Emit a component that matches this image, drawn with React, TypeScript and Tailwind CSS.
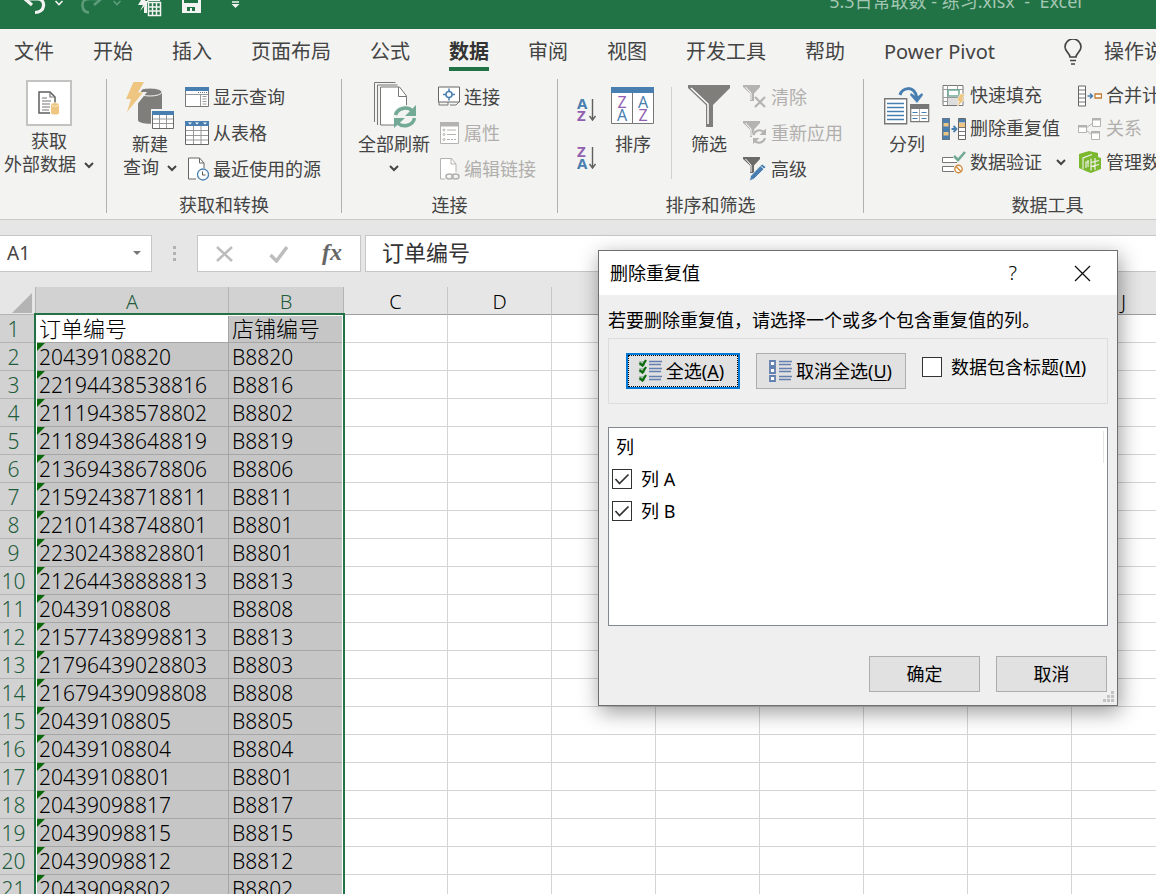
import { ReactNode, useState } from "react";

const TABS = ["文件", "开始", "插入", "页面布局", "公式", "数据", "审阅", "视图", "开发工具", "帮助", "Power Pivot"];

const COLUMNS = ["A", "B", "C", "D", "E", "F", "G", "H", "I", "J", "K", "L", "M", "N", "O", "P", "Q", "R", "S", "T"];

const ROWS = [
    ["订单编号", "店铺编号"],
    ["20439108820", "B8820"],
    ["22194438538816", "B8816"],
    ["21119438578802", "B8802"],
    ["21189438648819", "B8819"],
    ["21369438678806", "B8806"],
    ["21592438718811", "B8811"],
    ["22101438748801", "B8801"],
    ["22302438828801", "B8801"],
    ["21264438888813", "B8813"],
    ["20439108808", "B8808"],
    ["21577438998813", "B8813"],
    ["21796439028803", "B8803"],
    ["21679439098808", "B8808"],
    ["20439108805", "B8805"],
    ["20439108804", "B8804"],
    ["20439108801", "B8801"],
    ["20439098817", "B8817"],
    ["20439098815", "B8815"],
    ["20439098812", "B8812"],
    ["20439098802", "B8802"],
];

function Svg({ w, h, children }: { w: number; h: number; children: ReactNode }) {
    return (
        <svg width={w} height={h} viewBox={`0 0 ${w} ${h}`} fill="none" className="shrink-0" aria-hidden="true">
            {children}
        </svg>
    );
}

function Chevron() {
    return (
        <Svg w={10} h={8}>
            <path d="M1 2l4 4 4-4" stroke="#444" strokeWidth="2" />
        </Svg>
    );
}

/* ---------- title bar ---------- */

function QuickChevron() {
    return (
        <Svg w={10} h={28}>
            <path d="M1.5 12L5 15.5 8.5 12" stroke="currentColor" strokeWidth="1.6" />
        </Svg>
    );
}

function TitleBar() {
    return (
        <header className="-mt-8 flex h-[61px] shrink-0 items-end overflow-hidden bg-[#217346] pb-3 pl-[22px] pr-[74px] text-[#f3f3f1]">
            <div className="flex gap-4">
                <button aria-label="撤消" className="flex gap-2">
                    <Svg w={24} h={28}>
                        <path d="M4 10h11c5 0 7 3 6.5 7s-4 6.5-8.5 6.5" stroke="currentColor" strokeWidth="3.2" />
                        <path d="M9 3L3 10l7 6" stroke="currentColor" strokeWidth="3.2" />
                    </Svg>
                    <QuickChevron />
                </button>
                <button aria-label="恢复" className="flex gap-2 text-[#5f9c7b]">
                    <Svg w={24} h={28}>
                        <path d="M20 10H9c-5 0-7 3-6.5 7s3 6.5 6.5 6.5" stroke="currentColor" strokeWidth="2.5" />
                        <path d="M15 3l6 7-7 6" stroke="currentColor" strokeWidth="2.5" />
                    </Svg>
                    <QuickChevron />
                </button>
                <button aria-label="刷新表格">
                    <Svg w={24} h={28}>
                        <path d="M6 6L0 16h5l-3 6 9-10H7l5-6z" fill="currentColor" />
                        <path d="M12 6h10v6H9v12H6v-6z" fill="currentColor" />
                        <path d="M10.5 13.5h12v13h-12zM10.5 18h12M10.5 22h12M14.5 13.5v13M18.5 13.5v13" fill="#217346" stroke="currentColor" strokeWidth="1.5" />
                    </Svg>
                </button>
                <button aria-label="保存">
                    <Svg w={26} h={28}>
                        <path d="M4 6h19v18H4z" fill="currentColor" />
                        <path d="M6 6h14v8H6zM9 18h8v4H9z" fill="#217346" />
                        <path d="M12 19h2v4h-2z" fill="currentColor" />
                    </Svg>
                </button>
                <button aria-label="自定义快速访问工具栏">
                    <Svg w={30} h={28}>
                        <path d="M12 13h7M12 9.5h7" stroke="currentColor" strokeWidth="1.5" />
                        <path d="M11.5 15h8l-4 4z" fill="currentColor" />
                    </Svg>
                </button>
            </div>
            <h1 className="mb-0.5 ml-auto whitespace-pre text-[18px] leading-7 text-[#a3c6b2]">5.3日常取数 - 练习.xlsx  -  Excel</h1>
        </header>
    );
}

/* ---------- ribbon icons ---------- */

function GetDataIcon() {
    return (
        <Svg w={22} h={24}>
            <path d="M1 1h11l5 5v16H1z" fill="#fff" stroke="#5f5f5d" strokeWidth="1.5" />
            <path d="M12 1v5h5M4 7h5M4 10h9M4 13h8M4 16h8M4 19h7" stroke="#777" strokeWidth="1.2" />
            <path d="M12 12h10v12H12z" fill="#fff" />
            <path d="M13 14v8c0 2 8 2 8 0v-8" fill="#eec681" />
            <ellipse cx="17" cy="13.5" rx="4" ry="1.8" fill="#eec681" stroke="#fff" strokeWidth=".6" />
        </Svg>
    );
}

function NewQueryIcon() {
    return (
        <Svg w={48} h={48}>
            <path d="M12 10v28c0 5 24 5 24 0V10" fill="#7f7e7b" />
            <ellipse cx="24" cy="10" rx="12" ry="4" fill="#7f7e7b" stroke="#f3f3f1" strokeWidth="1" />
            <path d="M7 0h12l-6 11h6L3 31H0l4-14h-5z" fill="#f3f3f1" stroke="#f3f3f1" strokeWidth="2" />
            <path d="M7.5 0H18l-6 10.5h5L1 30l4-13H0z" fill="#eec681" />
            <path d="M25 27h24v21H25z" fill="#f3f3f1" />
            <path d="M26.5 29.5h21v17h-21z" fill="#fff" stroke="#6a6a68" />
            <path d="M33.5 32v14M40.5 32v14M27 37h20M27 41.5h20" stroke="#999" />
            <path d="M26 29h22v4H26z" fill="#487fb0" />
        </Svg>
    );
}

function ShowQueryIcon() {
    return (
        <Svg w={24} h={20}>
            <path d="M.5 .5h23v19H.5z" fill="#fff" stroke="#777" />
            <path d="M0 0h24v4H0z" fill="#487fb0" />
            <path d="M13 5.5h9" stroke="#777" strokeDasharray="1 1" />
            <path d="M15.5 7v12M1 7.5h22M17.5 9.5h4M17.5 12h4M17.5 14.5h4M17.5 17h4" stroke="#999" />
        </Svg>
    );
}

function FromTableIcon() {
    return (
        <Svg w={24} h={24}>
            <path d="M.5 .5h23v23H.5z" fill="#fff" stroke="#666" />
            <path d="M8.5 5v18M16 5v18M1 9.5h22M1 14.5h22M1 19h22" stroke="#999" />
            <path d="M0 0h24v5H0z" fill="#487fb0" />
            <path d="M3 1.5h4l-2 2zM10 1.5h4l-2 2zM18 1.5h4l-2 2z" fill="#fff" />
        </Svg>
    );
}

function RecentIcon() {
    return (
        <Svg w={24} h={24}>
            <path d="M11 22H3.5V1h11L19 6v5" fill="#fff" stroke="#666" />
            <path d="M14.5 1v5H19" stroke="#666" />
            <circle cx="18" cy="17.5" r="5.5" fill="#fff" stroke="#487fb0" strokeWidth="1.3" />
            <path d="M17.5 14.5V18h3" stroke="#555" />
        </Svg>
    );
}

function RefreshIcon() {
    return (
        <Svg w={46} h={48}>
            <path d="M3.5 40V.5h21M6.5 43V3h20" stroke="#777" />
            <path d="M9.5 5h19l7 9v29h-26z" fill="#fff" stroke="#777" />
            <path d="M27.5 5v9.5h8" stroke="#777" />
            <circle cx="34" cy="35" r="12" fill="#f3f3f1" />
            <path d="M24.5 33a10 9 0 0 1 17-4M43.5 36a10 9 0 0 1-17 5" stroke="#73aa97" strokeWidth="3.5" />
            <path d="M45 23v11H34zM23 46V36h11z" fill="#73aa97" />
        </Svg>
    );
}

function ConnectionIcon() {
    return (
        <Svg w={22} h={22}>
            <path d="M.5 1h21v15H.5z" fill="#fff" stroke="#666" />
            <path d="M1 16v3h9v-3M12 19h6l3-3" stroke="#777" />
            <path d="M11 2.5v12M5 8.5h12" stroke="#487fb0" strokeWidth="1.5" />
            <circle cx="11" cy="8.5" r="3" fill="#fff" stroke="#487fb0" strokeWidth="1.5" />
        </Svg>
    );
}

function PropertiesIcon() {
    return (
        <Svg w={22} h={22}>
            <path d="M2.5 .5h18v21h-18z" fill="#fff" stroke="#b5b3b1" />
            <path d="M2 0h19v4.5H2z" fill="#b5b3b1" />
            <path d="M9 8h9M9 12.5h9M9 17.5h3M13 17.5h2M16 17.5h2" stroke="#b5b3b1" />
            <circle cx="6" cy="8" r="1" stroke="#b5b3b1" />
            <circle cx="6" cy="12.5" r="1" stroke="#b5b3b1" />
            <circle cx="6" cy="17.5" r="1" stroke="#b5b3b1" />
        </Svg>
    );
}

function EditLinksIcon() {
    return (
        <Svg w={22} h={24}>
            <path d="M7 22H2.5V1.5h11L18 7v8" fill="#fff" stroke="#b5b3b1" />
            <path d="M13 1.5V7h5" stroke="#b5b3b1" />
            <ellipse cx="11.5" cy="19.5" rx="3.5" ry="2.5" stroke="#b5b3b1" strokeWidth="1.6" />
            <ellipse cx="17.5" cy="19.5" rx="3.5" ry="2.5" stroke="#b5b3b1" strokeWidth="1.6" />
        </Svg>
    );
}

function SortLetters({ top, bottom }: { top: string; bottom: string }) {
    const color = (letter: string) => (letter === "A" ? "#487fb0" : "#9160b0");
    return (
        <Svg w={20} h={26}>
            <text x="0" y="12" fontSize="15" fontWeight="700" fill={color(top)}>{top}</text>
            <text x="0" y="24" fontSize="15" fontWeight="700" fill={color(bottom)}>{bottom}</text>
            <path d="M15.5 2v20M12.5 19l3 4 3-4" stroke="#5f5f5d" strokeWidth="1.4" />
        </Svg>
    );
}

function SortIcon() {
    return (
        <Svg w={44} h={38}>
            <path d="M.5 .5h42v36H.5z" fill="#fff" stroke="#777" />
            <path d="M21.5 5v32" stroke="#777" />
            <path d="M0 0h43v6H0z" fill="#487fb0" />
            <text x="11" y="21" fontSize="16" textAnchor="middle" fill="#9160b0">Z</text>
            <text x="11" y="34" fontSize="16" textAnchor="middle" fill="#487fb0">A</text>
            <text x="32" y="21" fontSize="16" textAnchor="middle" fill="#487fb0">A</text>
            <text x="32" y="34" fontSize="16" textAnchor="middle" fill="#9160b0">Z</text>
        </Svg>
    );
}

function FilterIcon() {
    return (
        <Svg w={42} h={42}>
            <path d="M0 0h42v3L25 20v22h-7V20L0 3z" fill="#7f7e7b" />
            <path d="M3 3l17 16v20" stroke="#fff" strokeWidth="1.5" />
        </Svg>
    );
}

function SmallFunnel({ color }: { color: string }) {
    return (
        <>
            <path d="M0 0h17v2l-6 6.5V16H7V8.5L0 2z" fill={color} />
            <path d="M2.5 2L8 8v7" stroke="#fff" />
        </>
    );
}

function ClearIcon() {
    return (
        <Svg w={24} h={24}>
            <SmallFunnel color="#b5b3b1" />
            <path d="M12 12l10 10M22 12L12 22" stroke="#b5b3b1" strokeWidth="2.2" />
        </Svg>
    );
}

function ReapplyIcon() {
    return (
        <Svg w={24} h={24}>
            <SmallFunnel color="#b5b3b1" />
            <circle cx="16.5" cy="15.5" r="7.5" fill="#f3f3f1" />
            <path d="M10.5 14A6 6 0 0 1 21 11.500M22 17a6 6 0 0 1-10.500 2.500" stroke="#b5b3b1" strokeWidth="2.2" />
            <path d="M23 7.5V14h-6.500zM10 23v-6h6.500z" fill="#b5b3b1" />
        </Svg>
    );
}

function AdvancedIcon() {
    return (
        <Svg w={24} h={24}>
            <SmallFunnel color="#6c6b69" />
            <path d="M19 7l4 3-12 12-4.500 2 1-5z" fill="#487fb0" stroke="#f3f3f1" strokeWidth=".8" />
            <path d="M17.5 9l4 3.500" stroke="#f3f3f1" />
        </Svg>
    );
}

function TextToColumnsIcon() {
    return (
        <Svg w={46} h={40}>
            <path d="M.7 12.7h22v25H.7z" fill="#fff" stroke="#777" strokeWidth="1.4" />
            <path d="M3 17.5h17M3 21.5h17M3 25.5h17M3 29.5h17M3 33.5h17" stroke="#487fb0" strokeWidth="1.3" />
            <path d="M26.7 18.7h18v17h-18z" fill="#fff" stroke="#777" strokeWidth="1.2" />
            <path d="M26 18h19v5H26z" fill="#777" />
            <path d="M35.5 23v12M27 29.5h17" stroke="#aaa" />
            <path d="M28.5 26.5h5M37.5 26.5h5M28.5 32.5h5M37.5 32.5h5" stroke="#487fb0" strokeWidth="1.2" />
            <path d="M16 9c2-7 14-11 17 3" stroke="#487fb0" strokeWidth="3" />
            <path d="M26 9l7 8 6-8-1-2-5 4-6-4z" fill="#487fb0" />
        </Svg>
    );
}

function FlashFillIcon() {
    return (
        <Svg w={24} h={24}>
            <path d="M1 1.5h20v20H1z" fill="#fff" stroke="#777" />
            <path d="M1 5.5h20M1 13.5h20M1 17.5h14M5.5 1v20M15.5 1v5" stroke="#999" />
            <path d="M6 14h10v7H6z" fill="#ddd" />
            <path d="M6 6h11v6H6z" fill="#fff" stroke="#73aa97" strokeWidth="1.6" />
            <path d="M18 10h5l-2.500 5H23l-8 8 2-6h-2.500z" fill="#eec681" stroke="#f3f3f1" strokeWidth=".6" />
        </Svg>
    );
}

function RemoveDuplicatesIcon() {
    return (
        <Svg w={24} h={24}>
            <path d="M0 1h8v22H0z" fill="#487fb0" />
            <path d="M1.5 6h5v3.500h-5zM1.5 15h5v3.500h-5z" fill="#eec681" />
            <path d="M.5 1.5h7v21h-7z" stroke="#6a7780" />
            <path d="M16.5 1.5h7v21h-7z" fill="#fff" stroke="#666" />
            <path d="M17 2h6v3.500h-6z" fill="#487fb0" />
            <path d="M17 6h6v4h-6z" fill="#eec681" />
            <path d="M17 10.5h6M17 14.5h6M17 18.5h6" stroke="#777" />
            <path d="M9.5 12h4M11.5 9l3 3-3 3" stroke="#487fb0" strokeWidth="1.8" />
        </Svg>
    );
}

function ValidationIcon() {
    return (
        <Svg w={24} h={24}>
            <path d="M11 7.5H.5v5H15M12 16.5H.5v5H12" fill="#fff" stroke="#777" />
            <path d="M12 6l4 4 7-8" stroke="#73aa97" strokeWidth="2.6" />
            <circle cx="16.5" cy="19" r="3.7" fill="#fff" stroke="#d08a3c" strokeWidth="1.4" />
            <path d="M14 16.5l5 5" stroke="#d08a3c" strokeWidth="1.4" />
        </Svg>
    );
}

function ConsolidateIcon() {
    return (
        <Svg w={24} h={22}>
            <path d="M.5 1h7v20h-7z" fill="#fff" stroke="#666" />
            <path d="M1 5h6M1 9h6M1 13h6M1 17h6" stroke="#777" />
            <path d="M9.5 11h4M12 8.5l2.5 2.5-2.5 2.5" stroke="#487fb0" strokeWidth="1.5" />
            <path d="M17 9h6.5v4H17z" fill="#fff" stroke="#c17c2f" strokeWidth="1.3" />
        </Svg>
    );
}

function RelationsIcon() {
    return (
        <Svg w={24} h={24}>
            <path d="M8 11l7-5M8 13l6 5" stroke="#b5b3b1" />
            <path d="M.5 8.5h8v7h-8zM14.5 1.5h8v8h-8zM13.5 14.5h8v8h-8z" fill="#fff" stroke="#b5b3b1" />
            <path d="M0 8h9v2.500H0zM14 1h9v2.500h-9zM13 14h9v2.500h-9z" fill="#b5b3b1" />
        </Svg>
    );
}

function ManageModelIcon() {
    return (
        <Svg w={24} h={24}>
            <path d="M1 4l10-3 9 2v4l3 1v11l-10 4-3-1-9-4z" fill="#7cb82f" />
            <path d="M5 19V8l9-3.500M8 18v-6h3M10 10v7M13 8.5v12M13 12.5l8-2M13 16.5l8-2M17 8v12" stroke="#f3f3f1" strokeWidth="1.1" />
        </Svg>
    );
}

/* ---------- ribbon ---------- */

function LargeButton({ icon, lines, menu, iconClass = "h-[54px]" }: { icon: ReactNode; lines: string[]; menu?: boolean; iconClass?: string }) {
    return (
        <button className="flex shrink-0 flex-col items-center self-start text-[18px] leading-[23px]">
            <span className={`flex items-center justify-center ${iconClass}`}>{icon}</span>
            <span>{lines[0]}</span>
            <span className="flex h-[23px] items-center gap-2">
                {lines[1]}
                {menu && <Chevron />}
            </span>
        </button>
    );
}

function SmallButton({ icon, label, menu, disabled }: { icon: ReactNode; label: string; menu?: boolean; disabled?: boolean }) {
    return (
        <button disabled={disabled} className="flex flex-1 items-center gap-1 whitespace-nowrap text-[18px] disabled:text-[#b1afad]">
            {icon}
            <span>{label}</span>
            {menu && <span className="ml-2.5"><Chevron /></span>}
        </button>
    );
}

function Stack({ children, className = "h-[108px]" }: { children: ReactNode; className?: string }) {
    return <div className={`flex shrink-0 flex-col ${className}`}>{children}</div>;
}

function Group({ label, className, children }: { label?: string; className: string; children: ReactNode }) {
    return (
        <section className={`flex h-[134px] shrink-0 flex-col justify-between border-r border-[#b3b1af] ${className}`}>
            <div className="flex items-start">{children}</div>
            <div className="text-center text-[18px] leading-4">{label}</div>
        </section>
    );
}

function Ribbon() {
    const [active, setActive] = useState("数据");
    return (
        <div className="shrink-0 overflow-hidden border-b border-[#c8c8c8] bg-[#f3f3f1] text-[#444]">
            <nav className="flex h-[50px] items-start gap-[39px] whitespace-nowrap pl-[14px] text-xl">
                {TABS.map((tab) => (
                    <button
                        key={tab}
                        onClick={() => setActive(tab)}
                        className={
                            tab === active
                                ? "h-[42px] shrink-0 border-b-4 border-[#217346] pt-2 font-bold text-[#333]"
                                : "h-[42px] shrink-0 border-b-4 border-transparent pt-2"
                        }
                    >
                        {tab}
                    </button>
                ))}
                <button className="ml-7 flex h-[42px] shrink-0 items-center gap-5 border-b-4 border-transparent pt-2">
                    <Svg w={22} h={26}>
                        <path d="M8 18c0-4-5-5-5-10a8 8 0 0 1 16 0c0 5-5 6-5 10zM8 21.5h6M9 25h4" stroke="#444" strokeWidth="1.6" />
                    </Svg>
                    操作说明搜索
                </button>
            </nav>
            <div className="flex h-[140px] items-start">
                <Group className="w-[107px] pl-1">
                    <LargeButton
                        icon={<span className="flex size-[46px] items-center justify-center border-2 border-[#c3c3c1] bg-white"><GetDataIcon /></span>}
                        lines={["获取", "外部数据"]}
                        menu
                        iconClass="h-[51px] pb-1"
                    />
                </Group>
                <Group label="获取和转换" className="w-[235px]">
                    <div className="flex gap-2 pl-4">
                        <LargeButton icon={<NewQueryIcon />} lines={["新建", "查询"]} menu />
                        <Stack>
                            <SmallButton icon={<ShowQueryIcon />} label="显示查询" />
                            <SmallButton icon={<FromTableIcon />} label="从表格" />
                            <SmallButton icon={<RecentIcon />} label="最近使用的源" />
                        </Stack>
                    </div>
                </Group>
                <Group label="连接" className="w-[216px]">
                    <div className="flex gap-2 pl-4">
                        <LargeButton icon={<RefreshIcon />} lines={["全部刷新", ""]} menu />
                        <Stack>
                            <SmallButton icon={<ConnectionIcon />} label="连接" />
                            <SmallButton icon={<PropertiesIcon />} label="属性" disabled />
                            <SmallButton icon={<EditLinksIcon />} label="编辑链接" disabled />
                        </Stack>
                    </div>
                </Group>
                <Group label="排序和筛选" className="w-[306px]">
                    <div className="flex items-start pl-[19px]">
                        <div className="flex flex-col gap-[22px] pt-[18px]">
                            <button aria-label="升序"><SortLetters top="A" bottom="Z" /></button>
                            <button aria-label="降序"><SortLetters top="Z" bottom="A" /></button>
                        </div>
                        <div className="pl-3.5">
                            <LargeButton icon={<SortIcon />} lines={["排序"]} />
                        </div>
                        <div className="mx-4 mt-2 h-[92px] w-px bg-[#d2d0ce]" />
                        <LargeButton icon={<FilterIcon />} lines={["筛选"]} />
                        <div className="pl-[13px]">
                            <Stack>
                                <SmallButton icon={<ClearIcon />} label="清除" disabled />
                                <SmallButton icon={<ReapplyIcon />} label="重新应用" disabled />
                                <SmallButton icon={<AdvancedIcon />} label="高级" />
                            </Stack>
                        </div>
                    </div>
                </Group>
                <Group label="数据工具" className="w-[368px]">
                    <div className="flex gap-3 pl-5">
                        <LargeButton icon={<TextToColumnsIcon />} lines={["分列"]} />
                        <Stack className="h-[100px]">
                            <SmallButton icon={<FlashFillIcon />} label="快速填充" />
                            <SmallButton icon={<RemoveDuplicatesIcon />} label="删除重复值" />
                            <SmallButton icon={<ValidationIcon />} label="数据验证" menu />
                        </Stack>
                        <Stack className="h-[100px]">
                            <SmallButton icon={<ConsolidateIcon />} label="合并计算" />
                            <SmallButton icon={<RelationsIcon />} label="关系" disabled />
                            <SmallButton icon={<ManageModelIcon />} label="管理数据模型" />
                        </Stack>
                    </div>
                </Group>
            </div>
        </div>
    );
}

/* ---------- formula bar and sheet ---------- */

function FormulaBar() {
    return (
        <div className="flex h-[67px] shrink-0 items-start bg-[#e6e6e6] pt-[15px]">
            <div className="flex h-[37px] w-[152px] shrink-0 items-center border border-l-0 border-[#c6c6c6] bg-white pr-2.5">
                <input aria-label="名称框" defaultValue="A1" className="w-full min-w-0 bg-transparent pl-[7px] text-[19px] text-[#444] outline-none" />
                <Svg w={8} h={5}>
                    <path d="M0 0h8L4 4z" fill="#777" />
                </Svg>
            </div>
            <div className="flex h-[37px] w-[45px] shrink-0 flex-col items-center justify-center gap-[3px]">
                <span className="size-[3px] bg-[#b1b1b1]" />
                <span className="size-[3px] bg-[#b1b1b1]" />
                <span className="size-[3px] bg-[#b1b1b1]" />
            </div>
            <div className="flex h-[37px] w-[164px] shrink-0 items-center justify-between border border-[#c6c6c6] bg-white pl-[17px] pr-[18px]">
                <button aria-label="取消输入">
                    <Svg w={20} h={18}>
                        <path d="M2 2l15 14M17 2L2 16" stroke="#bdbdbd" strokeWidth="2.5" />
                    </Svg>
                </button>
                <button aria-label="输入">
                    <Svg w={20} h={18}>
                        <path d="M1.5 10l6 6L18 2" stroke="#bdbdbd" strokeWidth="3.5" />
                    </Svg>
                </button>
                <button aria-label="插入函数" className="pb-1 font-['Liberation_Serif',serif] text-2xl font-bold italic leading-none text-[#666]">
                    fx
                </button>
            </div>
            <input
                aria-label="编辑栏"
                defaultValue="订单编号"
                className="ml-1 h-[37px] min-w-0 flex-1 border border-r-0 border-[#c6c6c6] bg-white pb-1.5 pl-4 text-[22px] text-[#333] outline-none"
            />
        </div>
    );
}

function Sheet() {
    return (
        <main className="relative min-h-0 flex-1 overflow-hidden bg-white">
            <table className="w-[2216px] table-fixed border-separate border-spacing-0 text-[21px] text-black">
                <colgroup>
                    <col className="w-9" />
                    <col className="w-[193px]" />
                    <col className="w-[115px]" />
                    {COLUMNS.slice(2).map((name) => (
                        <col key={name} className="w-[104px]" />
                    ))}
                </colgroup>
                <thead>
                    <tr className="h-7 bg-[#e6e6e6] leading-[25px]">
                        <th aria-label="全选" className="border-b border-r border-[#b4b4b4] p-0">
                            <span className="flex justify-end pr-[3px] pt-1">
                                <Svg w={20} h={20}>
                                    <path d="M20 0v20H0z" fill="#b4b4b4" />
                                </Svg>
                            </span>
                        </th>
                        {COLUMNS.map((name, i) => (
                            <th
                                key={name}
                                scope="col"
                                className={
                                    i < 2
                                        ? "border-b border-r border-b-[#9f9f9f] border-r-[#b4b4b4] bg-[#d2d2d2] p-0 pt-0.5 text-xl font-light leading-[25px] text-[#1e5c3c]"
                                        : "border-b border-r border-b-[#9f9f9f] border-r-[#c6c6c6] p-0 pt-0.5 text-xl font-light leading-[25px]"
                                }
                            >
                                {name}
                            </th>
                        ))}
                    </tr>
                </thead>
                <tbody>
                    {ROWS.map((row, r) => (
                        <tr key={r} className="h-7">
                            <th
                                scope="row"
                                className="border-b border-r border-[#b4b4b4] bg-[#d2d2d2] p-0 pr-2 pt-0.5 font-light leading-[25px] text-[#1e5c3c]"
                            >
                                {r + 1}
                            </th>
                            {COLUMNS.map((name, c) => {
                                if (c > 1) return <td key={name} className="border-b border-r border-[#d4d4d4] p-0" />;
                                return (
                                    <td
                                        key={name}
                                        className={
                                            r === 0 && c === 0
                                                ? "border-b border-r border-[#a6a6a6] bg-white p-0 pl-[3px] text-[22px] font-light leading-[27px]"
                                                : r === 0
                                                  ? "border-b border-r border-[#a6a6a6] bg-[#c6c6c6] p-0 pl-[3px] text-[22px] font-light leading-[27px]"
                                                  : "relative border-b border-r border-[#a6a6a6] bg-[#c6c6c6] p-0 pl-[3px] pt-0.5 font-light leading-[25px]"
                                        }
                                    >
                                        {row[c]}
                                        {r > 0 && c === 0 && (
                                            <span className="absolute left-px top-0 border-4 border-b-transparent border-l-[#0a6a0a] border-r-transparent border-t-[#0a6a0a]" />
                                        )}
                                    </td>
                                );
                            })}
                        </tr>
                    ))}
                </tbody>
            </table>
            {/* selection frame around A:B */}
            <div className="pointer-events-none absolute -bottom-1 left-[34px] top-[26px] w-[311px] border-2 border-[#217346] shadow-[inset_0_0_0_1px_#fff]" />
        </main>
    );
}

/* ---------- dialog ---------- */

function CheckBox({ label, hotkey, checked }: { label: string; hotkey?: string; checked?: boolean }) {
    return (
        <label className="flex items-center gap-[9px] whitespace-nowrap">
            <span className="grid size-5 shrink-0">
                <input type="checkbox" defaultChecked={checked} className="peer col-start-1 row-start-1 size-5 appearance-none border border-[#333] bg-white" />
                <svg viewBox="0 0 20 20" fill="none" className="pointer-events-none invisible col-start-1 row-start-1 size-5 peer-checked:visible" aria-hidden="true">
                    <path d="M3.5 10l4 4.5 9-9" stroke="#333" strokeWidth="1.7" />
                </svg>
            </span>
            <span>
                {label}
                {hotkey && <>(<u className="underline-offset-2">{hotkey}</u>)</>}
            </span>
        </label>
    );
}

function ListIcon({ ticked }: { ticked?: boolean }) {
    return (
        <Svg w={24} h={24}>
            {[2, 9, 17].map((y) => (
                <g key={y}>
                    <path d={`M11 ${y}.5h13M11 ${y + 3}.5h12`} stroke="#6480b0" strokeWidth="1.6" />
                    {ticked ? (
                        <>
                            <path d={`M1 ${y}h6v5H1z`} fill="#a9bfae" />
                            <path d={`M1.5 ${y + 2}l3 2.5L8 ${y - 1}`} stroke="#0a6a0a" strokeWidth="2.2" />
                        </>
                    ) : (
                        <path d={`M2 ${y}h5v5H2z`} fill="#fff" stroke="#6480b0" strokeWidth="1.8" />
                    )}
                </g>
            ))}
        </Svg>
    );
}

function RemoveDuplicatesDialog() {
    return (
        <div
            role="dialog"
            aria-label="删除重复值"
            className="absolute left-[598px] top-[250px] flex w-[520px] flex-col border border-[#6f6f6f] bg-[#efefef] text-[18px] leading-6 text-black shadow-[2px_6px_20px_rgba(0,0,0,0.4)]"
        >
            <div className="flex h-11 items-center bg-white pl-[11px] pr-[26px]">
                <h2 className="flex-1">删除重复值</h2>
                <button aria-label="帮助" className="mr-[57px] text-xl font-light">?</button>
                <button aria-label="关闭">
                    <Svg w={17} h={17}>
                        <path d="M1 1l15 15M16 1L1 16" stroke="#111" strokeWidth="1.3" />
                    </Svg>
                </button>
            </div>
            <div className="px-[9px] pb-[13px] pt-[13px]">
                <p className="pb-1.5">若要删除重复值，请选择一个或多个包含重复值的列。</p>
                <div className="flex h-[66px] items-center gap-4 border border-[#dcdcdc] pl-[17px]">
                    <button className="h-[36px] w-[114px] shrink-0 border-2 border-[#0078d7] bg-[#e1e1e1]">
                        <span className="flex h-full items-center justify-center gap-1 border border-dotted border-black pr-1">
                            <ListIcon ticked />
                            <span>全选(<u className="underline-offset-2">A</u>)</span>
                        </span>
                    </button>
                    <button className="flex h-[36px] w-[150px] shrink-0 items-center justify-center gap-1 border border-[#adadad] bg-[#e1e1e1] pr-0.5">
                        <ListIcon />
                        <span>取消全选(<u className="underline-offset-2">U</u>)</span>
                    </button>
                    <div className="pb-2">
                        <CheckBox label="数据包含标题" hotkey="M" />
                    </div>
                </div>
                <div className="mt-[23px] h-[199px] border border-[#828790] bg-white px-[3px] pt-[3px]">
                    <div className="h-8 border-r border-[#e5e5e5] pl-1 leading-8">列</div>
                    <div className="flex h-8 items-center"><CheckBox label="列 A" checked /></div>
                    <div className="flex h-8 items-center"><CheckBox label="列 B" checked /></div>
                </div>
                <div className="flex justify-end gap-4 pr-px pt-[30px]">
                    <button className="h-[36px] w-[111px] border border-[#adadad] bg-[#e1e1e1]">确定</button>
                    <button className="h-[36px] w-[111px] border border-[#adadad] bg-[#e1e1e1]">取消</button>
                </div>
            </div>
            <div className="absolute bottom-0.5 right-0.5">
                <Svg w={12} h={12}>
                    <path d="M8 0h3v3H8zM4 4h3v3H4zM8 4h3v3H8zM0 8h3v3H0zM4 8h3v3H4zM8 8h3v3H8z" fill="#c3c3c3" />
                </Svg>
            </div>
        </div>
    );
}

export default function App() {
    return (
        <div className="relative flex h-screen flex-col overflow-hidden bg-white font-['Noto_Sans','Noto_Sans_CJK_SC',sans-serif]">
            <TitleBar />
            <Ribbon />
            <FormulaBar />
            <Sheet />
            <RemoveDuplicatesDialog />
        </div>
    );
}
